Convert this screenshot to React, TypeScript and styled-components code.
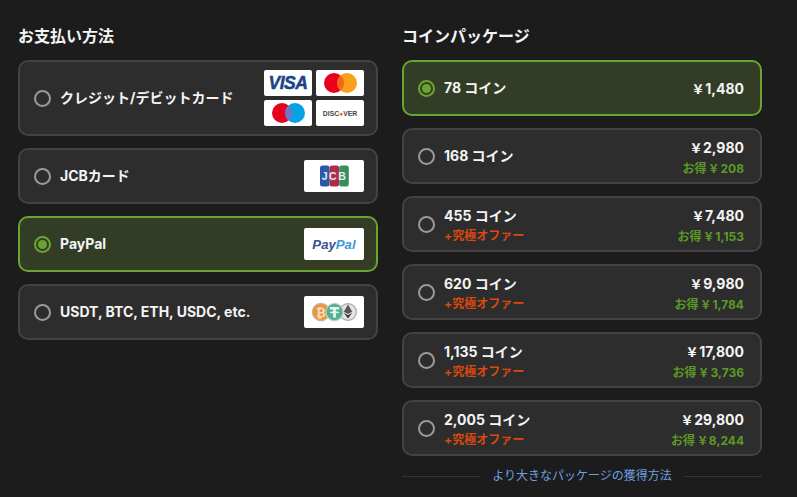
import styled, { createGlobalStyle } from "styled-components";

interface SelectedProps {
  $selected?: boolean;
}

interface StackProps {
  $double?: boolean;
}

interface PaymentMethod {
  name: string;
  logo: "cards" | "jcb" | "paypal" | "crypto";
  selected?: boolean;
}

interface CoinPackage {
  coins: string;
  price: string;
  save?: string;
  offer?: boolean;
  selected?: boolean;
}

const methods: PaymentMethod[] = [
  { name: "クレジット/デビットカード", logo: "cards" },
  { name: "JCBカード", logo: "jcb" },
  { name: "PayPal", logo: "paypal", selected: true },
  { name: "USDT, BTC, ETH, USDC, etc.", logo: "crypto" },
];

const packages: CoinPackage[] = [
  { coins: "78 コイン", price: "1,480", selected: true },
  { coins: "168 コイン", price: "2,980", save: "208" },
  { coins: "455 コイン", price: "7,480", save: "1,153", offer: true },
  { coins: "620 コイン", price: "9,980", save: "1,784", offer: true },
  { coins: "1,135 コイン", price: "17,800", save: "3,736", offer: true },
  { coins: "2,005 コイン", price: "29,800", save: "8,244", offer: true },
];

function VisaLogo() {
  return (
    <svg width="48" height="26" viewBox="0 0 48 26">
      <text x="24" y="19.2" textAnchor="middle" fontFamily="'Liberation Sans', sans-serif" fontSize="17.5" fontWeight="700" fontStyle="italic" fill="#1b4488" stroke="#1b4488" strokeWidth="0.5" letterSpacing="-0.5">
        VISA
      </text>
    </svg>
  );
}

function MastercardLogo() {
  return (
    <svg width="48" height="26" viewBox="0 0 48 26">
      <circle cx="18" cy="13" r="10" fill="#e8001c" />
      <circle cx="31" cy="13" r="10" fill="#fba01d" />
      <path d="M24.5 5.500a10 10 0 0 1 0 15a10 10 0 0 1 0-15z" fill="#f4661b" />
    </svg>
  );
}

function MaestroLogo() {
  return (
    <svg width="48" height="26" viewBox="0 0 48 26">
      <circle cx="18" cy="13" r="10" fill="#e8001c" />
      <circle cx="31" cy="13" r="10" fill="#05a3e6" />
      <path d="M24.5 5.500a10 10 0 0 1 0 15a10 10 0 0 1 0-15z" fill="#7673c0" />
    </svg>
  );
}

function DiscoverLogo() {
  return (
    <svg width="48" height="26" viewBox="0 0 48 26">
      <text x="24" y="16" textAnchor="middle" fontFamily="'Liberation Sans', sans-serif" fontSize="6.8" fontWeight="700" fill="#444">
        DISC<tspan fill="#e8701c">●</tspan>VER
      </text>
    </svg>
  );
}

function JcbLogo() {
  return (
    <svg width="60" height="32" viewBox="0 0 60 32">
      <rect x="16" y="5.500" width="9.600" height="21" rx="2.500" fill="#2a5aa6" />
      <rect x="25.600" y="5.500" width="9.600" height="21" rx="2.500" fill="#b02a4a" />
      <rect x="35.200" y="5.500" width="9.600" height="21" rx="2.500" fill="#33925a" />
      <text x="30.500" y="20" textAnchor="middle" fontFamily="'Liberation Sans', sans-serif" fontSize="10.500" fontWeight="700" fill="#e6ecf0" letterSpacing="1.500">
        JCB
      </text>
    </svg>
  );
}

function PaypalLogo() {
  return (
    <svg width="60" height="32" viewBox="0 0 60 32">
      <text x="30" y="21" textAnchor="middle" fontFamily="'Liberation Sans', sans-serif" fontSize="13.200" fontWeight="700" fontStyle="italic" fill="#3a4f92">
        Pay<tspan fill="#3b9bd6">Pal</tspan>
      </text>
    </svg>
  );
}

function CryptoLogo() {
  return (
    <svg width="60" height="32" viewBox="0 0 60 32">
      <circle cx="17" cy="16" r="8.600" fill="#e9963f" stroke="#c9b08f" strokeWidth="1.200" />
      <text x="17" y="20.500" textAnchor="middle" fontFamily="'Liberation Sans', sans-serif" fontSize="12" fontWeight="700" fill="#f8dfbf">
        ₿
      </text>
      <circle cx="44" cy="16" r="8.400" fill="#e4e4e4" stroke="#a8a8a8" strokeWidth="1.200" />
      <path d="M44 8.500l-4.200 7.200 4.200 2.400 4.200-2.400z" fill="#555" />
      <path d="M39.800 16.800l4.200 5.800 4.200-5.800-4.200 2.400z" fill="#333" />
      <circle cx="30.500" cy="16" r="8.600" fill="#53ae94" stroke="#b8d4ca" strokeWidth="1.200" />
      <path d="M25.800 11h9.400v2.400h-3.300v2.100c1.800.1 3.300.4 3.300.9s-1.500.8-3.300.9v4.500h-2.800v-4.500c-1.800-.1-3.300-.4-3.300-.9s1.500-.8 3.300-.9v-2.100h-3.300z" fill="#e6f3ef" />
    </svg>
  );
}

function MethodLogo({ logo }: { logo: PaymentMethod["logo"] }) {
  if (logo === "cards") {
    return (
      <CardGrid>
        <SmallLogo><VisaLogo /></SmallLogo>
        <SmallLogo><MastercardLogo /></SmallLogo>
        <SmallLogo><MaestroLogo /></SmallLogo>
        <SmallLogo><DiscoverLogo /></SmallLogo>
      </CardGrid>
    );
  }
  return (
    <WideLogo>
      {logo === "jcb" && <JcbLogo />}
      {logo === "paypal" && <PaypalLogo />}
      {logo === "crypto" && <CryptoLogo />}
    </WideLogo>
  );
}

function App() {
  return (
    <>
      <GlobalStyle />
      <Page>
        <Column>
          <Heading>お支払い方法</Heading>
          <List>
            {methods.map((method) => (
              <Option key={method.name} $selected={method.selected}>
                <Left>
                  <Radio $selected={method.selected} />
                  <Label>{method.name}</Label>
                </Left>
                <LogoSlot>
                  <MethodLogo logo={method.logo} />
                </LogoSlot>
              </Option>
            ))}
          </List>
        </Column>
        <Column>
          <Heading>コインパッケージ</Heading>
          <List>
            {packages.map((pack) => (
              <PackageOption key={pack.coins} $selected={pack.selected}>
                <Left>
                  <Radio $selected={pack.selected} />
                  <Stack $double={pack.offer}>
                    <Label>{pack.coins}</Label>
                    {pack.offer && <Offer>+究極オファー</Offer>}
                  </Stack>
                </Left>
                <PriceStack $double={!!pack.save}>
                  <Label>
                    <Yen>¥</Yen>
                    {pack.price}
                  </Label>
                  {pack.save && (
                    <Save>
                      お得 <SaveYen>¥</SaveYen>
                      {pack.save}
                    </Save>
                  )}
                </PriceStack>
              </PackageOption>
            ))}
          </List>
          <Divider>
            <DividerLink>より大きなパッケージの獲得方法</DividerLink>
          </Divider>
        </Column>
      </Page>
    </>
  );
}

const GlobalStyle = createGlobalStyle`
  html, body {
    margin: 0;
    padding: 0;
    background: #1c1c1c;
    font-family: Inter, "Noto Sans CJK JP", sans-serif;
  }
`;

const Page = styled.div`
  display: flex;
  gap: 24px;
  width: 797px;
  height: 497px;
  padding: 24px 18px 0;
  box-sizing: border-box;
  overflow: hidden;
  background: #1c1c1c;
  color: #f4f4f4;
`;

const Column = styled.section`
  display: flex;
  flex-direction: column;
  width: 360px;
`;

const Heading = styled.h2`
  margin: 0 0 12px;
  font-size: 16px;
  line-height: 24px;
  font-weight: 700;
  color: #f4f4f4;
`;

const List = styled.div`
  display: flex;
  flex-direction: column;
  gap: 12px;
`;

const Option = styled.div<SelectedProps>`
  display: flex;
  align-items: center;
  justify-content: space-between;
  min-height: 56px;
  padding: 8px 12px 8px 14px;
  box-sizing: border-box;
  border: 2px solid ${(props) => (props.$selected ? "#6aa532" : "#434343")};
  border-radius: 10px;
  background: ${(props) => (props.$selected ? "#333d26" : "#2d2d2d")};
`;

const PackageOption = styled(Option)`
  height: 56px;
  padding: 0 16px 0 14px;
`;

const Left = styled.div`
  display: flex;
  align-items: center;
  gap: 9px;
`;

const Radio = styled.span<SelectedProps>`
  position: relative;
  flex: none;
  width: 17px;
  height: 17px;
  box-sizing: border-box;
  border: 2px solid ${(props) => (props.$selected ? "#6aa532" : "#9a9a9a")};
  border-radius: 50%;

  &::after {
    content: "";
    display: ${(props) => (props.$selected ? "block" : "none")};
    position: absolute;
    inset: 2px;
    border-radius: 50%;
    background: #6aa532;
  }
`;

const Label = styled.span`
  font-size: 14px;
  line-height: 20px;
  font-weight: 700;
  color: #f4f4f4;
`;

const Stack = styled.div<StackProps>`
  display: flex;
  flex-direction: column;
  gap: 2px;
  padding-top: ${(props) => (props.$double ? "2px" : "0")};
`;

const PriceStack = styled(Stack)`
  align-items: flex-end;
`;

const Yen = styled.span`
  display: inline-block;
  font-family: "Noto Sans CJK JP", sans-serif;
  margin-right: 3px;
  transform: scaleX(1.1);
`;

const SaveYen = styled(Yen)`
  margin-left: 1px;
`;

const Offer = styled.span`
  font-size: 12px;
  line-height: 16px;
  font-weight: 700;
  color: #d9480f;
`;

const Save = styled.span`
  font-size: 12px;
  line-height: 16px;
  font-weight: 700;
  color: #5c9a26;
  white-space: pre;
`;

const LogoSlot = styled.div`
  display: flex;
  flex: none;
`;

const CardGrid = styled.div`
  display: grid;
  grid-template-columns: 48px 48px;
  gap: 4px;
`;

const SmallLogo = styled.div`
  display: flex;
  width: 48px;
  height: 26px;
  border-radius: 2px;
  background: #fff;
`;

const WideLogo = styled.div`
  display: flex;
  width: 60px;
  height: 32px;
  border-radius: 2px;
  background: #fff;
`;

const Divider = styled.div`
  display: flex;
  align-items: center;
  gap: 12px;
  margin-top: 10px;

  &::before,
  &::after {
    content: "";
    flex: 1;
    height: 1px;
    background: #333;
  }
`;

const DividerLink = styled.a`
  font-size: 12px;
  line-height: 20px;
  color: #6ea0e0;
`;

export default App;
